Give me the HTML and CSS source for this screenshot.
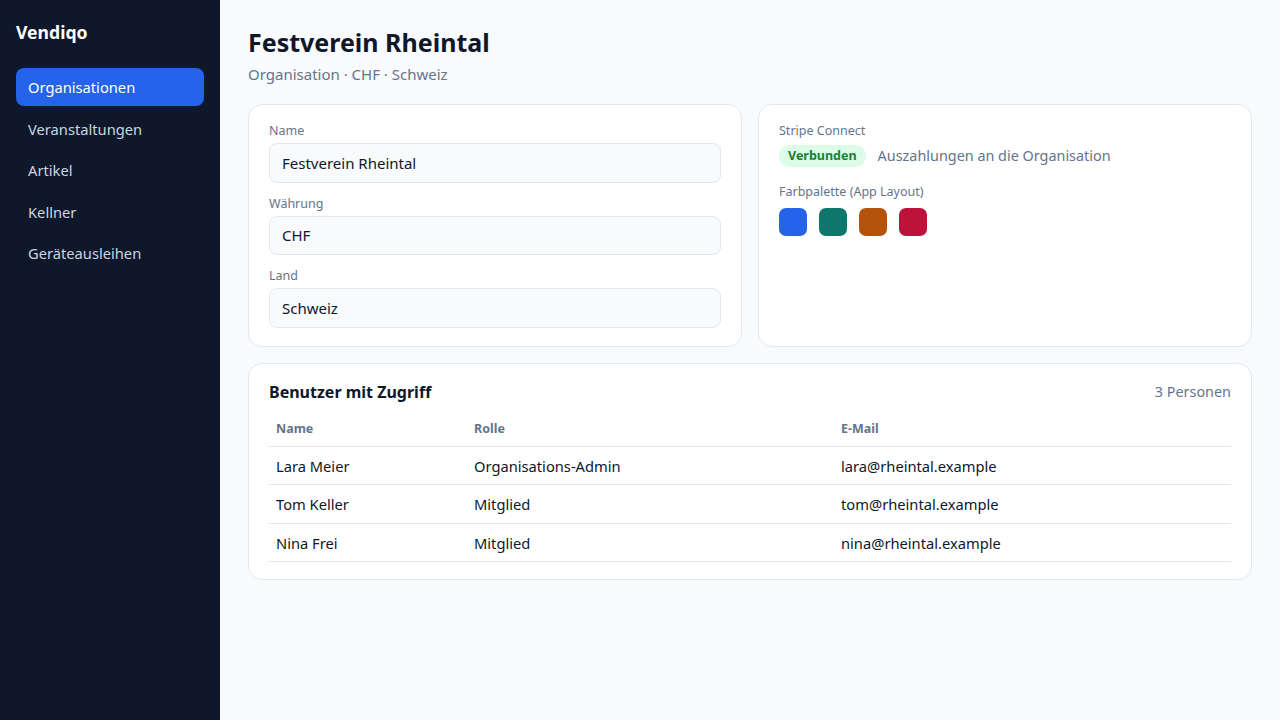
FILE: index.html
```html
<!DOCTYPE html>
<html lang="de">
<head>
<meta charset="utf-8">
<title>Vendiqo – Festverein Rheintal</title>
<link rel="stylesheet" href="styles.css">
</head>
<body>
<div class="app">
  <aside class="sidebar">
    <div class="brand">Vendiqo</div>
    <nav class="nav">
      <a class="nav-item active">Organisationen</a>
      <a class="nav-item">Veranstaltungen</a>
      <a class="nav-item">Artikel</a>
      <a class="nav-item">Kellner</a>
      <a class="nav-item">Geräteausleihen</a>
    </nav>
  </aside>
  <main class="main">
    <h1 class="title">Festverein Rheintal</h1>
    <div class="subtitle">Organisation · CHF · Schweiz</div>
    <div class="grid">
      <section class="card form-card">
        <div class="field">
          <div class="label">Name</div>
          <div class="input">Festverein Rheintal</div>
        </div>
        <div class="field">
          <div class="label">Währung</div>
          <div class="input">CHF</div>
        </div>
        <div class="field">
          <div class="label">Land</div>
          <div class="input">Schweiz</div>
        </div>
      </section>
      <section class="card info-card">
        <div class="group">
          <div class="label">Stripe Connect</div>
          <div class="stripe-row">
            <span class="badge">Verbunden</span>
            <span class="muted">Auszahlungen an die Organisation</span>
          </div>
        </div>
        <div class="group">
          <div class="label">Farbpalette (App Layout)</div>
          <div class="swatches">
            <span class="swatch blue"></span>
            <span class="swatch teal"></span>
            <span class="swatch amber"></span>
            <span class="swatch rose"></span>
          </div>
        </div>
      </section>
    </div>
    <section class="card users-card">
      <div class="users-head">
        <h2 class="users-title">Benutzer mit Zugriff</h2>
        <span class="count">3 Personen</span>
      </div>
      <table class="table">
        <thead>
          <tr><th class="col-name">Name</th><th class="col-role">Rolle</th><th>E-Mail</th></tr>
        </thead>
        <tbody>
          <tr><td>Lara Meier</td><td>Organisations-Admin</td><td>lara@rheintal.example</td></tr>
          <tr><td>Tom Keller</td><td>Mitglied</td><td>tom@rheintal.example</td></tr>
          <tr><td>Nina Frei</td><td>Mitglied</td><td>nina@rheintal.example</td></tr>
        </tbody>
      </table>
    </section>
  </main>
</div>
</body>
</html>
```
FILE: styles.css
```css
* { box-sizing: border-box; }
html, body { margin: 0; height: 100%; }
body {
  font-family: "Noto Sans", "Open Sans", sans-serif;
  color: #0f172a;
  background: #f8fafc;
}
.app { display: flex; min-height: 720px; }
.sidebar {
  width: 220px;
  flex-shrink: 0;
  background: #0f172a;
  padding: 19px 16px;
}
.brand {
  color: #ffffff;
  font-weight: 700;
  font-size: 17.6px;
  line-height: 26px;
  margin-bottom: 23px;
}
.nav { display: flex; flex-direction: column; gap: 3.5px; }
.nav-item {
  display: block;
  color: #cbd5e1;
  font-size: 14.7px;
  line-height: 20px;
  padding: 9px 12px;
  border-radius: 8px;
}
.nav-item.active { background: #2563eb; color: #ffffff; }

.main { flex: 1; padding: 26px 28px; }
.title {
  margin: 0;
  font-size: 25px;
  line-height: 32px;
  font-weight: 700;
}
.subtitle {
  margin-top: 5px;
  font-size: 15px;
  line-height: 22px;
  color: #64748b;
}
.grid {
  margin-top: 19px;
  display: grid;
  grid-template-columns: 1fr 1fr;
  gap: 16px;
}
.card {
  background: #ffffff;
  border: 1px solid #e2e8f0;
  border-radius: 14px;
}
.form-card, .info-card { padding: 16px 20px 18px; }
.field + .field { margin-top: 11px; }
.label {
  font-size: 12.5px;
  line-height: 18px;
  padding-top: 1px;
  height: 18px;
  color: #64748b;
}
.input {
  margin-top: 4px;
  height: 39.5px;
  padding: 0 12px;
  display: flex;
  align-items: center;
  background: #f8fafc;
  border: 1px solid #e2e8f0;
  border-radius: 8px;
  font-size: 15px;
}
.stripe-row {
  margin-top: 4px;
  height: 24px;
  display: flex;
  align-items: center;
  gap: 12px;
}
.badge {
  background: #dcfce7;
  color: #15803d;
  font-weight: 700;
  font-size: 12.5px;
  line-height: 22px;
  padding: 0 9px;
  margin-top: 1px;
  border-radius: 999px;
}
.muted { color: #64748b; font-size: 14.4px; }
.group + .group { margin-top: 15px; }
.swatches { margin-top: 8px; display: flex; gap: 12px; }
.swatch { width: 28px; height: 28px; border-radius: 7px; display: block; }
.blue { background: #2563eb; }
.teal { background: #0f766e; }
.amber { background: #b45309; }
.rose { background: #be123c; }

.users-card { margin-top: 16px; padding: 17px 20px 17px; }
.users-head {
  display: flex;
  justify-content: space-between;
  align-items: center;
  height: 22px;
}
.users-title { margin: 0; font-size: 16px; font-weight: 700; line-height: 22px; }
.count { font-size: 14.4px; color: #64748b; }
.table {
  margin-top: 8px;
  width: 100%;
  border-collapse: collapse;
  font-size: 14.7px;
}
.table th {
  text-align: left;
  font-size: 12.5px;
  line-height: 16px;
  font-weight: 700;
  color: #64748b;
  padding: 10px 7px 9px;
  border-bottom: 1px solid #e2e8f0;
}
.table td {
  padding: 9px 7px 8.67px;
  line-height: 20px;
  border-bottom: 1px solid #e2e8f0;
}
.col-name { width: 198px; }
.col-role { width: 367px; }
```
